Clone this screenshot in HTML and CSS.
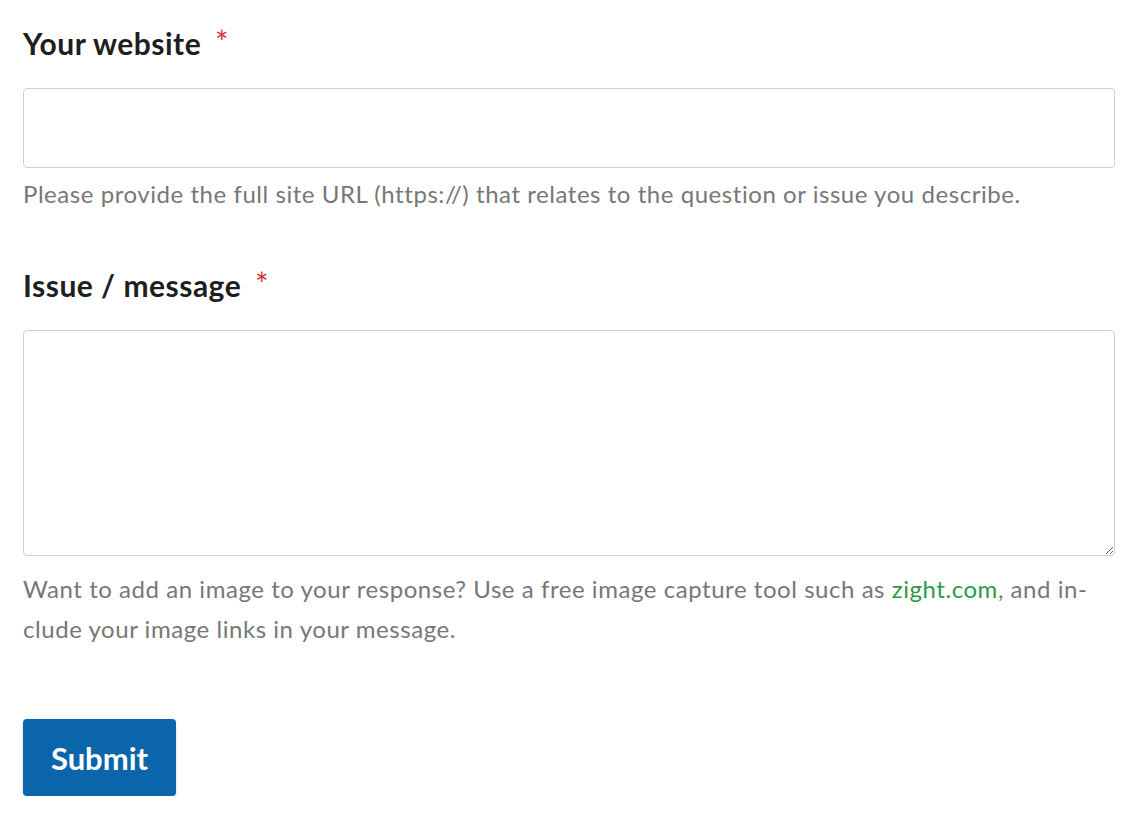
FILE: index.html
```html
<!DOCTYPE html>
<html lang="en">
<head>
    <meta charset="UTF-8">
    <meta name="viewport" content="width=device-width, initial-scale=1.0">
    <title>Support request</title>
    <link rel="stylesheet" href="styles.css">
</head>
<body>
    <form class="support-form">
        <div class="field">
            <label for="website" class="field-label">Your website <span class="required">*</span></label>
            <input type="url" id="website" class="field-input" required>
            <p class="field-help">Please provide the full site URL (https://) that relates to the question or issue you describe.</p>
        </div>

        <div class="field">
            <label for="message" class="field-label">Issue / message <span class="required">*</span></label>
            <textarea id="message" class="field-textarea" required></textarea>
            <p class="field-help">Want to add an image to your response? Use a free image capture tool such as <a href="#" class="help-link">zight.com</a>, and in&shy;clude your image links in your message.</p>
        </div>

        <button type="submit" class="submit-btn">Submit</button>
    </form>
</body>
</html>
```

FILE: styles.css
```css
* {
    margin: 0;
    padding: 0;
    box-sizing: border-box;
}

body {
    background: #ffffff;
    font-family: 'Lato', sans-serif;
    color: #222222;
}

.support-form {
    width: 1092px;
    margin-left: 23px;
    padding-top: 24px;
}

.field {
    margin-bottom: 52px;
}

.field-label {
    display: block;
    font-size: 30px;
    font-weight: 700;
    line-height: 36px;
    letter-spacing: 0.5px;
    color: #1e1e1e;
    margin-bottom: 27px;
}

.required {
    color: #d63638;
    font-weight: 400;
    font-size: 32px;
    margin-left: 6px;
    vertical-align: 1px;
}

.field-input,
.field-textarea {
    display: block;
    width: 100%;
    background: #ffffff;
    border: 1px solid #cfcfcf;
    border-radius: 4px;
    font-family: 'Lato', sans-serif;
    font-size: 22px;
    padding: 0 16px;
}

.field-input {
    height: 80px;
}

.field-textarea {
    height: 226px;
    padding: 12px 16px;
    resize: vertical;
}

.field-help {
    font-size: 24px;
    line-height: 40px;
    letter-spacing: 0.55px;
    color: #777777;
    margin-top: 6px;
}

.field-textarea + .field-help {
    margin-top: 13px;
}

.help-link {
    color: #2b9a45;
    text-decoration: none;
}

.submit-btn {
    display: block;
    background: #0b65ab;
    color: #ffffff;
    border: none;
    border-radius: 4px;
    height: 77px;
    width: 153px;
    font-family: 'Lato', sans-serif;
    font-size: 31px;
    font-weight: 700;
    cursor: pointer;
    margin-top: 70px;
    box-shadow: 0 1px 3px rgba(0, 0, 0, 0.15);
}
```
